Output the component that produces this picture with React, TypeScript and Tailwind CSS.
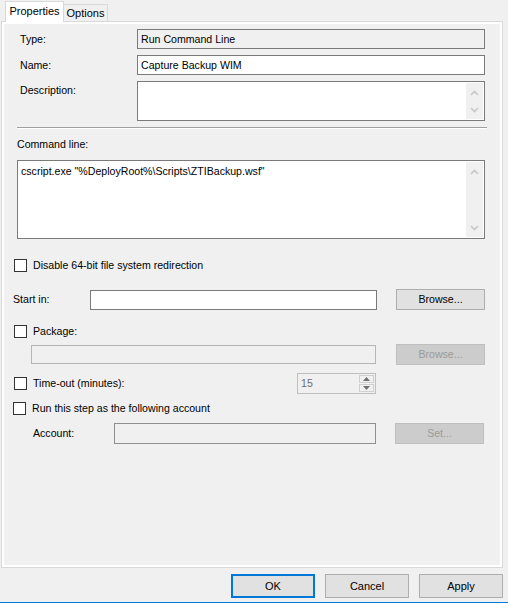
import React from "react";

function Chevron({ up }: { up?: boolean }) {
  return (
    <svg width="9" height="6" viewBox="0 0 9 6">
      {up ? (
        <polyline points="1,5 4.5,1.5 8,5" fill="none" stroke="#c6c6c6" strokeWidth="1.6" />
      ) : (
        <polyline points="1,1 4.5,4.5 8,1" fill="none" stroke="#c6c6c6" strokeWidth="1.6" />
      )}
    </svg>
  );
}

function ScrollBar({ pad }: { pad: string }) {
  return (
    <div className={`w-[17px] self-stretch bg-[#f0f0f0] flex flex-col items-center justify-between ${pad}`}>
      <Chevron up />
      <Chevron />
    </div>
  );
}

function Check() {
  return <span className="w-[13px] h-[13px] border border-[#333333] bg-white shrink-0" />;
}

export default function App() {
  return (
    <div className="w-[508px] h-[603px] bg-[#f0f0f0] text-black text-[10.6px] leading-[13px] font-['Liberation_Sans',Arial,sans-serif] flex flex-col overflow-hidden">
      {/* Tabs */}
      <div className="h-[21px] flex items-end pl-[5px] shrink-0">
        <div className="relative z-10 h-[21px] mb-[-1px] w-[59px] bg-white border-l border-t border-r border-[#d9d9d9] flex items-start justify-center pt-[3px] text-[11px]">
          Properties
        </div>
        <div className="h-[17px] w-[44px] border-t border-r border-[#d9d9d9] flex items-center justify-center text-[11px]">
          Options
        </div>
      </div>

      {/* Panel */}
      <div className="ml-[1px] w-[502px] h-[547px] shrink-0 border border-[#d9d9d9] bg-white p-[2px] flex">
        <div className="flex-1 bg-[#f0f0f0] flex flex-col">
          {/* Type */}
          <div className="mt-[5px] h-[20px] flex items-center">
            <div className="pl-[16px] w-[133px]">Type:</div>
            <div className="w-[348px] h-[20px] border border-[#7a7a7a] bg-[#f0f0f0] pl-[3px] flex items-center">
              Run Command Line
            </div>
          </div>
          {/* Name */}
          <div className="mt-[6px] h-[20px] flex items-center">
            <div className="pl-[16px] w-[133px]">Name:</div>
            <div className="w-[348px] h-[20px] border border-[#7a7a7a] bg-white pl-[3px] flex items-center">
              Capture Backup WIM
            </div>
          </div>
          {/* Description */}
          <div className="mt-[6px] h-[40px] flex items-start">
            <div className="pl-[16px] w-[133px] pt-[3px]">Description:</div>
            <div className="w-[348px] h-[40px] border border-[#7a7a7a] bg-white p-px flex">
              <div className="flex-1" />
              <ScrollBar pad="pt-[7px] pb-[6px]" />
            </div>
          </div>
          {/* Separator */}
          <div className="mt-[6px] ml-[13px] w-[470px] h-[2px] border-t border-[#a0a0a0] border-b border-b-white" />
          {/* Command line */}
          <div className="mt-[9px] pl-[13px]">Command line:</div>
          <div className="mt-[9px] ml-[13px] w-[468px] h-[79px] border border-[#7a7a7a] bg-white p-px flex">
            <div className="flex-1 pl-[2px] pt-[3px]">cscript.exe "%DeployRoot%\Scripts\ZTIBackup.wsf"</div>
            <ScrollBar pad="pt-[7px] pb-[6px]" />
          </div>
          {/* Disable 64-bit */}
          <div className="mt-[20px] h-[13px] flex items-center pl-[10px] gap-[6px]">
            <Check />
            <span>Disable 64-bit file system redirection</span>
          </div>
          {/* Start in */}
          <div className="mt-[17px] h-[21px] flex items-center">
            <div className="pl-[9px] w-[86px]">Start in:</div>
            <div className="w-[287px] h-[20px] border border-[#7a7a7a] bg-white" />
            <div className="ml-[19px] w-[89px] h-[21px] border border-[#adadad] bg-[#e1e1e1] flex items-center justify-center">
              Browse...
            </div>
          </div>
          {/* Package */}
          <div className="mt-[15px] h-[13px] flex items-center pl-[10px] gap-[6px]">
            <Check />
            <span>Package:</span>
          </div>
          <div className="mt-[6px] h-[21px] flex items-center">
            <div className="ml-[27px] w-[345px] h-[19px] border border-[#b5b5b5] bg-[#f0f0f0]" />
            <div className="ml-[20px] w-[89px] h-[21px] border border-[#bfbfbf] bg-[#cccccc] text-[#9a9a9a] flex items-center justify-center">
              Browse...
            </div>
          </div>
          {/* Time-out */}
          <div className="mt-[8px] h-[21px] flex items-center">
            <div className="w-[293px] pl-[10px] flex items-center gap-[6px]">
              <Check />
              <span>Time-out (minutes):</span>
            </div>
            <div className="w-[79px] h-[21px] border border-[#bfbfbf] bg-[#f0f0f0] flex items-center">
              <span className="flex-1 pl-[3px] text-[#6d6d6d]">15</span>
              <div className="w-[15px] h-[17px] mr-px flex flex-col gap-px">
                <div className="flex-1 border border-[#d0d0d0] flex items-center justify-center">
                  <svg width="7" height="4" viewBox="0 0 7 4"><polygon points="0,4 3.5,0 7,4" fill="#707070" /></svg>
                </div>
                <div className="flex-1 border border-[#d0d0d0] flex items-center justify-center">
                  <svg width="7" height="4" viewBox="0 0 7 4"><polygon points="0,0 3.5,4 7,0" fill="#707070" /></svg>
                </div>
              </div>
            </div>
          </div>
          {/* Run as */}
          <div className="mt-[8px] h-[13px] flex items-center pl-[9px] gap-[6px]">
            <Check />
            <span>Run this step as the following account</span>
          </div>
          {/* Account */}
          <div className="mt-[8px] h-[21px] flex items-center">
            <div className="pl-[29px] w-[110px]">Account:</div>
            <div className="w-[262px] h-[21px] border border-[#8f8f8f] bg-[#f0f0f0]" />
            <div className="ml-[19px] w-[89px] h-[21px] border border-[#bfbfbf] bg-[#cccccc] text-[#9a9a9a] flex items-center justify-center">
              Set...
            </div>
          </div>
        </div>
      </div>

      {/* Buttons */}
      <div className="mt-[6px] h-[24px] flex justify-end pr-[5px] gap-[10px] shrink-0">
        <div className="w-[84px] h-[24px] border-2 border-[#0078d7] bg-[#e1e1e1] flex items-center justify-center text-[11px]">
          OK
        </div>
        <div className="w-[84px] h-[24px] border border-[#adadad] bg-[#e1e1e1] flex items-center justify-center text-[11px]">
          Cancel
        </div>
        <div className="w-[84px] h-[24px] border border-[#adadad] bg-[#e1e1e1] flex items-center justify-center text-[11px]">
          Apply
        </div>
      </div>
      <div className="flex-1" />
      <div className="h-px bg-[#0078d7] shrink-0" />
    </div>
  );
}
